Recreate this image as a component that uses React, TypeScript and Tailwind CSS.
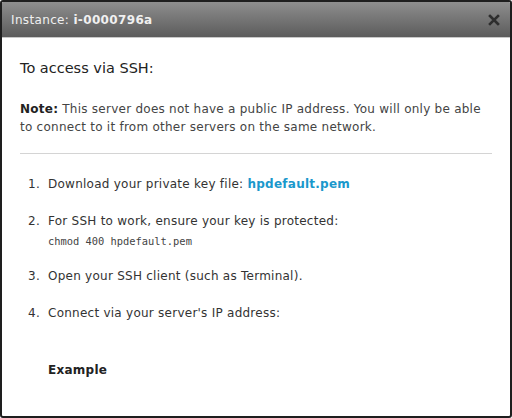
const App = () => {
  return (
    <div className="w-[512px] h-[418px] bg-white" style={{ fontFamily: '"DejaVu Sans", Verdana, sans-serif' }}>
      <div className="w-full h-full border-2 border-[#1e1e1e] rounded-[3px] flex flex-col overflow-hidden">
        <div className="h-[36px] shrink-0 flex items-center justify-between pl-[9px] pr-[10px] bg-gradient-to-b from-[#8e8e8e] to-[#5c5c5c] border-b border-[#c8c8c8]">
          <div className="text-[12px] tracking-[0.35px] text-[#f0f0f0]">
            Instance: <span className="font-bold">i-0000796a</span>
          </div>
          <svg width="12" height="12" viewBox="0 0 12 12" className="mt-[1px]">
            <path d="M2 2 L10 10 M10 2 L2 10" stroke="#2e2e2e" strokeWidth="2.6" strokeLinecap="square" />
          </svg>
        </div>

        <div className="px-[18px] pt-[19px] text-[#333] tracking-[0.25px]">
          <h2 className="text-[14.5px] leading-[22px] tracking-normal text-[#222]">To access via SSH:</h2>

          <p className="mt-[21px] text-[12px] leading-[18px] text-[#444]">
            <span className="font-bold text-[#222]">Note:</span> This server does not have a public IP address. You will only be able to connect to it from other servers on the same network.
          </p>

          <div className="mt-[17px] border-t border-[#d4d4d4]" />

          <ol className="mt-[21px] text-[12px] leading-[18px] text-[#333] flex flex-col gap-[19px]">
            <li className="flex">
              <span className="w-[28px] text-right pr-[8px] shrink-0">1.</span>
              <span>
                Download your private key file: <span className="font-bold text-[#1a98cc]">hpdefault.pem</span>
              </span>
            </li>
            <li className="flex">
              <span className="w-[28px] text-right pr-[8px] shrink-0">2.</span>
              <div>
                <div>For SSH to work, ensure your key is protected:</div>
                <div className="mt-[4px] text-[10.4px] leading-[14px] tracking-normal text-[#444]" style={{ fontFamily: '"DejaVu Sans Mono", monospace' }}>
                  chmod 400 hpdefault.pem
                </div>
              </div>
            </li>
            <li className="flex">
              <span className="w-[28px] text-right pr-[8px] shrink-0">3.</span>
              <span>Open your SSH client (such as Terminal).</span>
            </li>
            <li className="flex">
              <span className="w-[28px] text-right pr-[8px] shrink-0">4.</span>
              <div>
                <div>Connect via your server's IP address:</div>
                <div className="mt-[39px] font-bold text-[#222]">Example</div>
              </div>
            </li>
          </ol>
        </div>
      </div>
    </div>
  );
};

export default App;
